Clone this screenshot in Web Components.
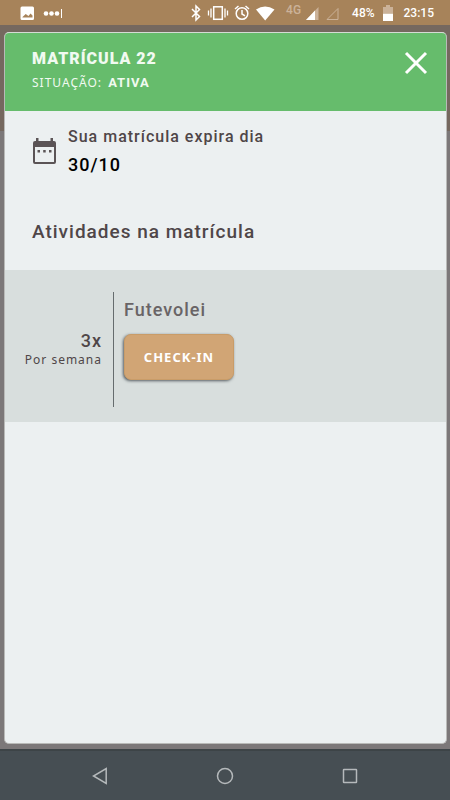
<!DOCTYPE html>
<html lang="pt-BR">
<head>
<meta charset="utf-8">
<meta name="viewport" content="width=device-width, initial-scale=1">
<title>Matrícula</title>
<style>
  body {
    margin: 0;
    font-family: "Noto Sans", sans-serif;
    color: #4f4648;
  }
</style>
</head>
<body>
<app-tela></app-tela>

<script>
// base: monta o shadow root a partir do html de cada componente
class AppElement extends HTMLElement {
  constructor() {
    super();
    this.attachShadow({ mode: 'open' });
    const template = document.createElement('template');
    template.innerHTML = this.template();
    this.shadowRoot.appendChild(template.content.cloneNode(true));
  }
}

class BarraStatus extends AppElement {
  template() {
    return `
      <style>
        :host {
          display: flex;
          align-items: center;
          justify-content: space-between;
          height: 25px;
          padding: 0 16px 0 20px;
          background: #a7835a;
          color: #fff;
          font: 500 12px/26px Roboto, sans-serif;
        }
        div { display: flex; align-items: center; }
        svg { display: block; fill: #fff; }
        .rede { align-self: flex-start; margin: 0 5px 0 11px; line-height: 20px; color: #cbb299; }
        .pct { margin: 0 8px 0 12px; }
        .hora { margin-left: 11px; }
      </style>
      <div>
        <svg width="42" height="16" viewBox="0 0 42 16">
          <path fill-rule="evenodd" d="M2 1.500h10.500q1.500 0 1.500 1.500v10.500q0 1.500-1.500 1.500H2Q.5 15 .5 13.500V3Q.5 1.500 2 1.500zm.5 11h10v-2L10.500 8.500 8.500 11 5.700 9 2.500 12z"/>
          <circle cx="26" cy="8.500" r="2.300"/><circle cx="31.500" cy="8.500" r="2.300"/><circle cx="37" cy="8.500" r="2.300"/>
          <path d="M41 4h1v9h-1z"/>
        </svg>
      </div>
      <div>
        <svg width="84" height="18" viewBox="0 0 84 18">
          <g fill="none" stroke="#fff" stroke-width="1.500">
            <path d="M1 5l7.500 7.500L5 16V2l3.500 3.500L1 13"/>
            <rect x="22.700" y="2.800" width="8.600" height="12.500"/>
            <path d="M20 4.500v9M17.500 6.500v5M34 4.500v9M36.500 6.500v5" stroke-width="1.300"/>
            <circle cx="51" cy="9.500" r="5.800"/>
            <path d="M51 6v4l3 1.800M44 5l3.500-3M58 5l-3.500-3"/>
          </g>
          <path d="M65 5.500Q74 -.5 83.500 5.500L74.200 16.500z"/>
        </svg>
        <span class="rede">4G</span>
        <svg width="34" height="16" viewBox="0 0 34 16">
          <path d="M12.500 2v13H0z" fill="#cbb299"/>
          <path d="M9 5.500V15H0z"/>
          <path d="M32 3.500v11H21z" fill="none" stroke="#cbb299"/>
        </svg>
        <span class="pct">48%</span>
        <svg width="10" height="16" viewBox="0 0 10 16">
          <path d="M3 0h4v2h3v6H0V2h3z" fill="#cbb299"/>
          <path d="M0 8.500h10V16H0z"/>
        </svg>
        <span class="hora">23:15</span>
      </div>
    `;
  }
}

class BarraNavegacao extends AppElement {
  template() {
    return `
      <style>
        :host {
          display: block;
          background: #464e53;
          border-top: 2px solid #3d4447;
        }
        nav { display: flex; justify-content: center; gap: 77px; }
        button {
          display: flex;
          align-items: center;
          justify-content: center;
          width: 48px;
          height: 49px;
          padding: 0;
          border: none;
          background: none;
          cursor: pointer;
        }
        svg { fill: none; stroke: #b5b9bb; stroke-width: 1.500; }
      </style>
      <nav>
        <button aria-label="Voltar"><svg width="18" height="18" viewBox="0 0 18 18"><path d="M15.200 1.500v15L2.500 9z"/></svg></button>
        <button aria-label="Início"><svg width="18" height="18" viewBox="0 0 18 18"><circle cx="9" cy="9" r="7.500"/></svg></button>
        <button aria-label="Recentes"><svg width="18" height="18" viewBox="0 0 18 18"><rect x="2.500" y="2.500" width="13" height="13" rx=".5"/></svg></button>
      </nav>
    `;
  }
}

class CabecalhoMatricula extends AppElement {
  template() {
    return `
      <style>
        :host {
          display: flex;
          justify-content: space-between;
          align-items: flex-start;
          padding: 14px 18px 16px 27px;
          background: #66bc6c;
          color: #f1faf1;
        }
        h1 { margin: 0; font: 900 16px/24px Roboto, sans-serif; letter-spacing: 1px; }
        p { margin: 0; font-size: 12px; line-height: 24px; letter-spacing: 1px; }
        ::slotted(b) { margin-left: 2px; font: 700 13px Roboto, sans-serif; }
        button { margin-top: 4px; padding: 0; border: none; background: none; cursor: pointer; }
        svg { display: block; stroke: #fff; stroke-width: 3; }
      </style>
      <div>
        <h1><slot name="titulo"></slot></h1>
        <p>SITUAÇÃO: <slot name="situacao"></slot></p>
      </div>
      <button aria-label="Fechar">
        <svg width="24" height="24" viewBox="0 0 24 24"><path d="M2 2l20 20M22 2L2 22"/></svg>
      </button>
    `;
  }
}

class AvisoValidade extends AppElement {
  template() {
    return `
      <style>
        :host {
          display: flex;
          align-items: center;
          gap: 11px;
          padding: 12px 27px 0;
          font-family: Roboto, sans-serif;
          font-weight: 500;
          letter-spacing: 1px;
        }
        svg { display: block; flex: none; fill: #5b5456; }
        p { margin: 0; font-size: 16px; line-height: 28px; }
        .data { color: #000; font-size: 18px; }
      </style>
      <svg width="25" height="28" viewBox="0 0 25 28">
        <path fill-rule="evenodd" d="M4 1h2.500v3h12V1H21v3h1q2 0 2 2v19q0 2-2 2H3q-2 0-2-2V6q0-2 2-2h1zM3 10v15h19V10z"/>
        <path d="M5.500 13H8v2.500H5.500zM11.200 13h2.500v2.500h-2.500zM17 13h2.500v2.500H17z"/>
      </svg>
      <div>
        <p>Sua matrícula expira dia</p>
        <p class="data"><slot></slot></p>
      </div>
    `;
  }
}

class ItemAtividade extends AppElement {
  template() {
    return `
      <style>
        :host {
          display: flex;
          padding: 22px 0 15px;
          background: #d8dedd;
          letter-spacing: 1px;
        }
        .vezes {
          display: flex;
          flex-direction: column;
          justify-content: center;
          box-sizing: border-box;
          width: 109px;
          padding-right: 11px;
          border-right: 1px solid #666c6e;
          text-align: right;
        }
        strong { font: 500 18px/20px Roboto, sans-serif; }
        small { font-size: 12px; line-height: 18px; }
        .info { padding: 5px 10px 27px; }
        h3 { margin: 0 0 11px; font: 500 18px/26px Roboto, sans-serif; color: #696466; }
        button {
          min-width: 110px;
          height: 46px;
          padding: 0 16px;
          border: 1px solid #c99c68;
          border-radius: 7px;
          background: #d1a575;
          box-shadow: -1px 1px 3px #555c60;
          color: #fff;
          font: 700 13px "Noto Sans", sans-serif;
          letter-spacing: 1px;
          cursor: pointer;
        }
      </style>
      <div class="vezes">
        <strong><slot name="vezes"></slot></strong>
        <small>Por semana</small>
      </div>
      <div class="info">
        <h3><slot name="nome"></slot></h3>
        <button>CHECK-IN</button>
      </div>
    `;
  }
}

class AppTela extends AppElement {
  template() {
    return `
      <style>
        :host { display: flex; flex-direction: column; min-height: 100vh; }
        main {
          flex: 1;
          display: flex;
          padding: 7px 3px 5px 4px;
          background: linear-gradient(#75685f 106px, #7c7879 106px);
        }
        .modal {
          flex: 1;
          min-width: 0;
          overflow: hidden;
          border: 1px solid #b9bab8;
          border-top-color: #d5dbd5;
          border-radius: 5px;
          background: #ecf0f1;
        }
        h2 { margin: 39px 27px 24px; font: 500 19px/28px Roboto, sans-serif; letter-spacing: 1px; }
      </style>
      <barra-status></barra-status>
      <main>
        <section class="modal" role="dialog" aria-label="Matrícula 22">
          <cabecalho-matricula>
            <span slot="titulo">MATRÍCULA 22</span>
            <b slot="situacao">ATIVA</b>
          </cabecalho-matricula>
          <aviso-validade>30/10</aviso-validade>
          <h2>Atividades na matrícula</h2>
          <item-atividade>
            <span slot="vezes">3x</span>
            <span slot="nome">Futevolei</span>
          </item-atividade>
        </section>
      </main>
      <barra-navegacao></barra-navegacao>
    `;
  }
}

customElements.define('barra-status', BarraStatus);
customElements.define('barra-navegacao', BarraNavegacao);
customElements.define('cabecalho-matricula', CabecalhoMatricula);
customElements.define('aviso-validade', AvisoValidade);
customElements.define('item-atividade', ItemAtividade);
customElements.define('app-tela', AppTela);
</script>
</body>
</html>
